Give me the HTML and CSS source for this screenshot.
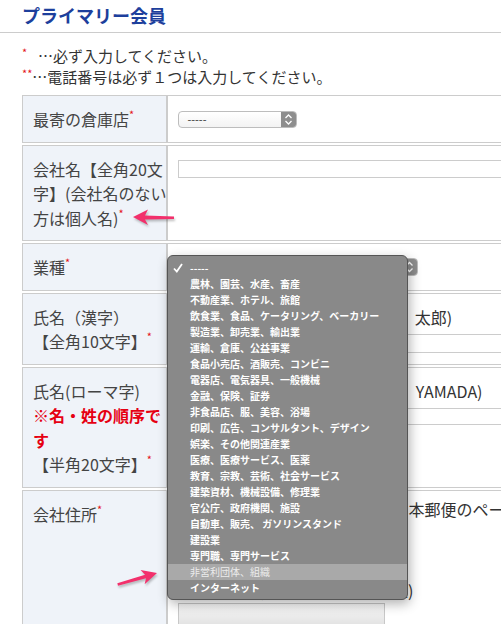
FILE: index.html
```html
<!DOCTYPE html>
<html lang="ja">
<head>
  <meta charset="UTF-8" />
  <title>プライマリー会員</title>
  <link rel="stylesheet" href="styles.css">
</head>
<body>
  <h1 class="page-title">プライマリー会員</h1>

  <div class="notes">
    <p><span class="req">*</span>&ensp; …必ず入力してください。</p>
    <p><span class="req">**</span>…電話番号は必ず１つは入力してください。</p>
  </div>

  <table class="form-table">
    <tr>
      <th>最寄の倉庫店<span class="req">*</span></th>
      <td>
        <div class="select select-store">
          <span class="select-text">-----</span>
          <span class="stepper"><svg width="15" height="17" viewBox="0 0 15 17"><polyline points="4.5,7 7.5,4 10.5,7" /><polyline points="4.5,10 7.5,13 10.5,10" /></svg></span>
        </div>
      </td>
    </tr>
    <tr>
      <th>会社名【全角20文<br>字】(会社名のない<br>方は個人名)<span class="req">*</span></th>
      <td><input type="text" class="textbox"></td>
    </tr>
    <tr>
      <th>業種<span class="req">*</span></th>
      <td>
        <div class="select select-industry">
          <span class="select-text">-----</span>
          <span class="stepper"><svg width="15" height="18" viewBox="0 0 15 18"><polyline points="4.5,7.5 7.5,4.5 10.5,7.5" /><polyline points="4.5,10.5 7.5,13.5 10.5,10.5" /></svg></span>
        </div>
      </td>
    </tr>
    <tr>
      <th>氏名（漢字）<br>【全角10文字】<span class="req">*</span></th>
      <td>
        <div class="hint hint-name">(例：山田　太郎)</div>
        <input type="text" class="textbox">
      </td>
    </tr>
    <tr>
      <th>氏名(ローマ字)<br><span class="warn">※名・姓の順序で<br>す</span><br>【半角20文字】<span class="req">*</span></th>
      <td>
        <div class="hint hint-name">(例：Taro　YAMADA)</div>
        <input type="text" class="textbox thin">
      </td>
    </tr>
    <tr>
      <th class="tall">会社住所<span class="req">*</span></th>
      <td class="addr-cell">
        <div class="hint addr-note">郵便番号がわからない場合は日本郵便のページで検索してください</div>
        <input type="text" class="zip">
        <input type="text" class="addr">
        <div class="hint addr-hint">(例：東京都千代田区)</div>
        <div class="addr-box"></div>
      </td>
    </tr>
  </table>

  <div class="menu">
    <ul>
      <li class="checked"><svg class="check" width="10" height="10" viewBox="0 0 10 10"><polyline points="1,5.5 3.8,8.5 9,1" /></svg>-----</li>
      <li>農林、園芸、水産、畜産</li>
      <li>不動産業、ホテル、旅館</li>
      <li>飲食業、食品、ケータリング、ベーカリー</li>
      <li>製造業、卸売業、輸出業</li>
      <li>運輸、倉庫、公益事業</li>
      <li>食品小売店、酒販売、コンビニ</li>
      <li>電器店、電気器具、一般機械</li>
      <li>金融、保険、証券</li>
      <li>非食品店、服、美容、浴場</li>
      <li>印刷、広告、コンサルタント、デザイン</li>
      <li>娯楽、その他関連産業</li>
      <li>医療、医療サービス、医薬</li>
      <li>教育、宗教、芸術、社会サービス</li>
      <li>建築資材、機械設備、修理業</li>
      <li>官公庁、政府機関、施設</li>
      <li>自動車、販売、 ガソリンスタンド</li>
      <li>建設業</li>
      <li>専門職、専門サービス</li>
      <li class="hover">非営利団体、組織</li>
      <li>インターネット</li>
    </ul>
  </div>

  <svg class="arrow arrow-left" width="50" height="24" viewBox="0 0 50 24">
    <path d="M4,10 L19,2.5 L16,8.5 L45,9.5 L45,12 L16,12.5 L19,18 Z" />
  </svg>
  <svg class="arrow arrow-right" width="56" height="36" viewBox="0 0 56 36">
    <path transform="rotate(-16 48 14)" d="M48,14 L33,6.5 L36,12.5 L7,13 L7,15.5 L36,16 L33,21.5 Z" />
  </svg>
</body>
</html>
```

FILE: styles.css
```css
html, body {
  overflow: hidden;
}
body {
  margin: 0;
  position: relative;
  font-family: "Noto Sans CJK JP", sans-serif;
  color: #333;
  background: #fff;
}
.page-title {
  margin: 0;
  padding: 4px 22px 6px;
  font-size: 18px;
  line-height: 22px;
  color: #1d3f9c;
  border-bottom: 1px solid #ccc;
}
.notes {
  padding: 12px 22px 0;
  font-size: 15px;
  line-height: 21px;
}
.notes p {
  margin: 0;
}
.req {
  color: #e4131b;
  font-size: 11px;
  line-height: 14px;
  vertical-align: top;
}
.warn {
  color: #e60012;
  font-weight: bold;
}
.form-table {
  margin: 6px 0 0 22px;
  border-collapse: separate;
  border-spacing: 0 2px;
  width: 660px;
  font-size: 16px;
}
.form-table th {
  width: 132px;
  padding: 11px 0 10px 10px;
  background: #eff3f9;
  border: 1px solid #ccc;
  border-right-width: 2px;
  text-align: left;
  font-weight: normal;
  line-height: 24.5px;
  color: #444;
  vertical-align: top;
  white-space: nowrap;
}
.form-table td {
  padding: 11px 10px 10px;
  border-top: 1px solid #ccc;
  border-bottom: 1px solid #ccc;
  line-height: 24.5px;
  vertical-align: top;
}
.select {
  display: flex;
  justify-content: space-between;
  margin-top: 4px;
  height: 17px;
  box-sizing: border-box;
  border: 1px solid #bdbdbd;
  border-radius: 4px;
  background: linear-gradient(#fff, #f3f3f3);
  overflow: hidden;
}
.select-store {
  width: 119px;
}
.select-industry {
  width: 240px;
  height: 18px;
  margin-top: 3px;
}
.select-text {
  padding-left: 8px;
  font-size: 11px;
  line-height: 15px;
  color: #333;
}
.stepper {
  width: 15px;
  background: #8e8e8e;
  display: flex;
  align-items: center;
}
.stepper svg {
  fill: none;
  stroke: #fff;
  stroke-width: 1.3;
}
.textbox {
  display: block;
  margin: 3px 0 0;
  width: 460px;
  height: 18px;
  box-sizing: border-box;
  border: 1px solid #ccc;
  padding: 0;
}
.hint-name + .textbox {
  margin-top: 5px;
  height: 19px;
}
.hint-name + .thin {
  height: 17px;
}
.hint {
  color: #333;
  white-space: nowrap;
}
.hint-name {
  padding-left: 151px;
}
.addr-cell.addr-cell {
  padding-top: 6px;
}
.addr-note {
  padding-left: 6px;
}
.zip, .addr {
  display: block;
  height: 20px;
  box-sizing: border-box;
  border: 1px solid #ccc;
  padding: 0;
  margin-top: 6px;
}
.zip {
  width: 90px;
}
.addr {
  width: 220px;
  margin-top: 5px;
  margin-bottom: 6px;
}
.addr-hint {
  width: 235px;
  text-align: right;
}
.addr-box {
  width: 205px;
  height: 34px;
  border: 1px solid #c8c8c8;
  background: linear-gradient(#f7f7f7, #d6d6d6);
}
.menu {
  position: absolute;
  left: 167px;
  top: 255px;
  width: 241px;
  height: 345px;
  box-sizing: border-box;
  padding: 4px 0;
  background: #898989;
  border: 1px solid #555;
  border-radius: 6px;
  box-shadow: 2px 4px 12px rgba(0, 0, 0, 0.3);
}
.menu ul {
  list-style: none;
  margin: 0;
  padding: 0;
}
.menu li {
  position: relative;
  height: 16px;
  padding-left: 22px;
  font-size: 10px;
  line-height: 16px;
  font-weight: bold;
  color: #fff;
  white-space: nowrap;
}
.menu li.hover {
  background: #a9a9a9;
  color: #ececec;
  font-weight: normal;
}
.check {
  position: absolute;
  left: 5px;
  top: 3px;
  fill: none;
  stroke: #fff;
  stroke-width: 1.8;
}
.arrow {
  position: absolute;
  fill: #f2306c;
  filter: drop-shadow(1px 2px 1px rgba(0, 0, 0, 0.25));
}
.arrow-left {
  left: 129px;
  top: 207px;
}
.arrow-right {
  left: 109px;
  top: 559px;
}
```
